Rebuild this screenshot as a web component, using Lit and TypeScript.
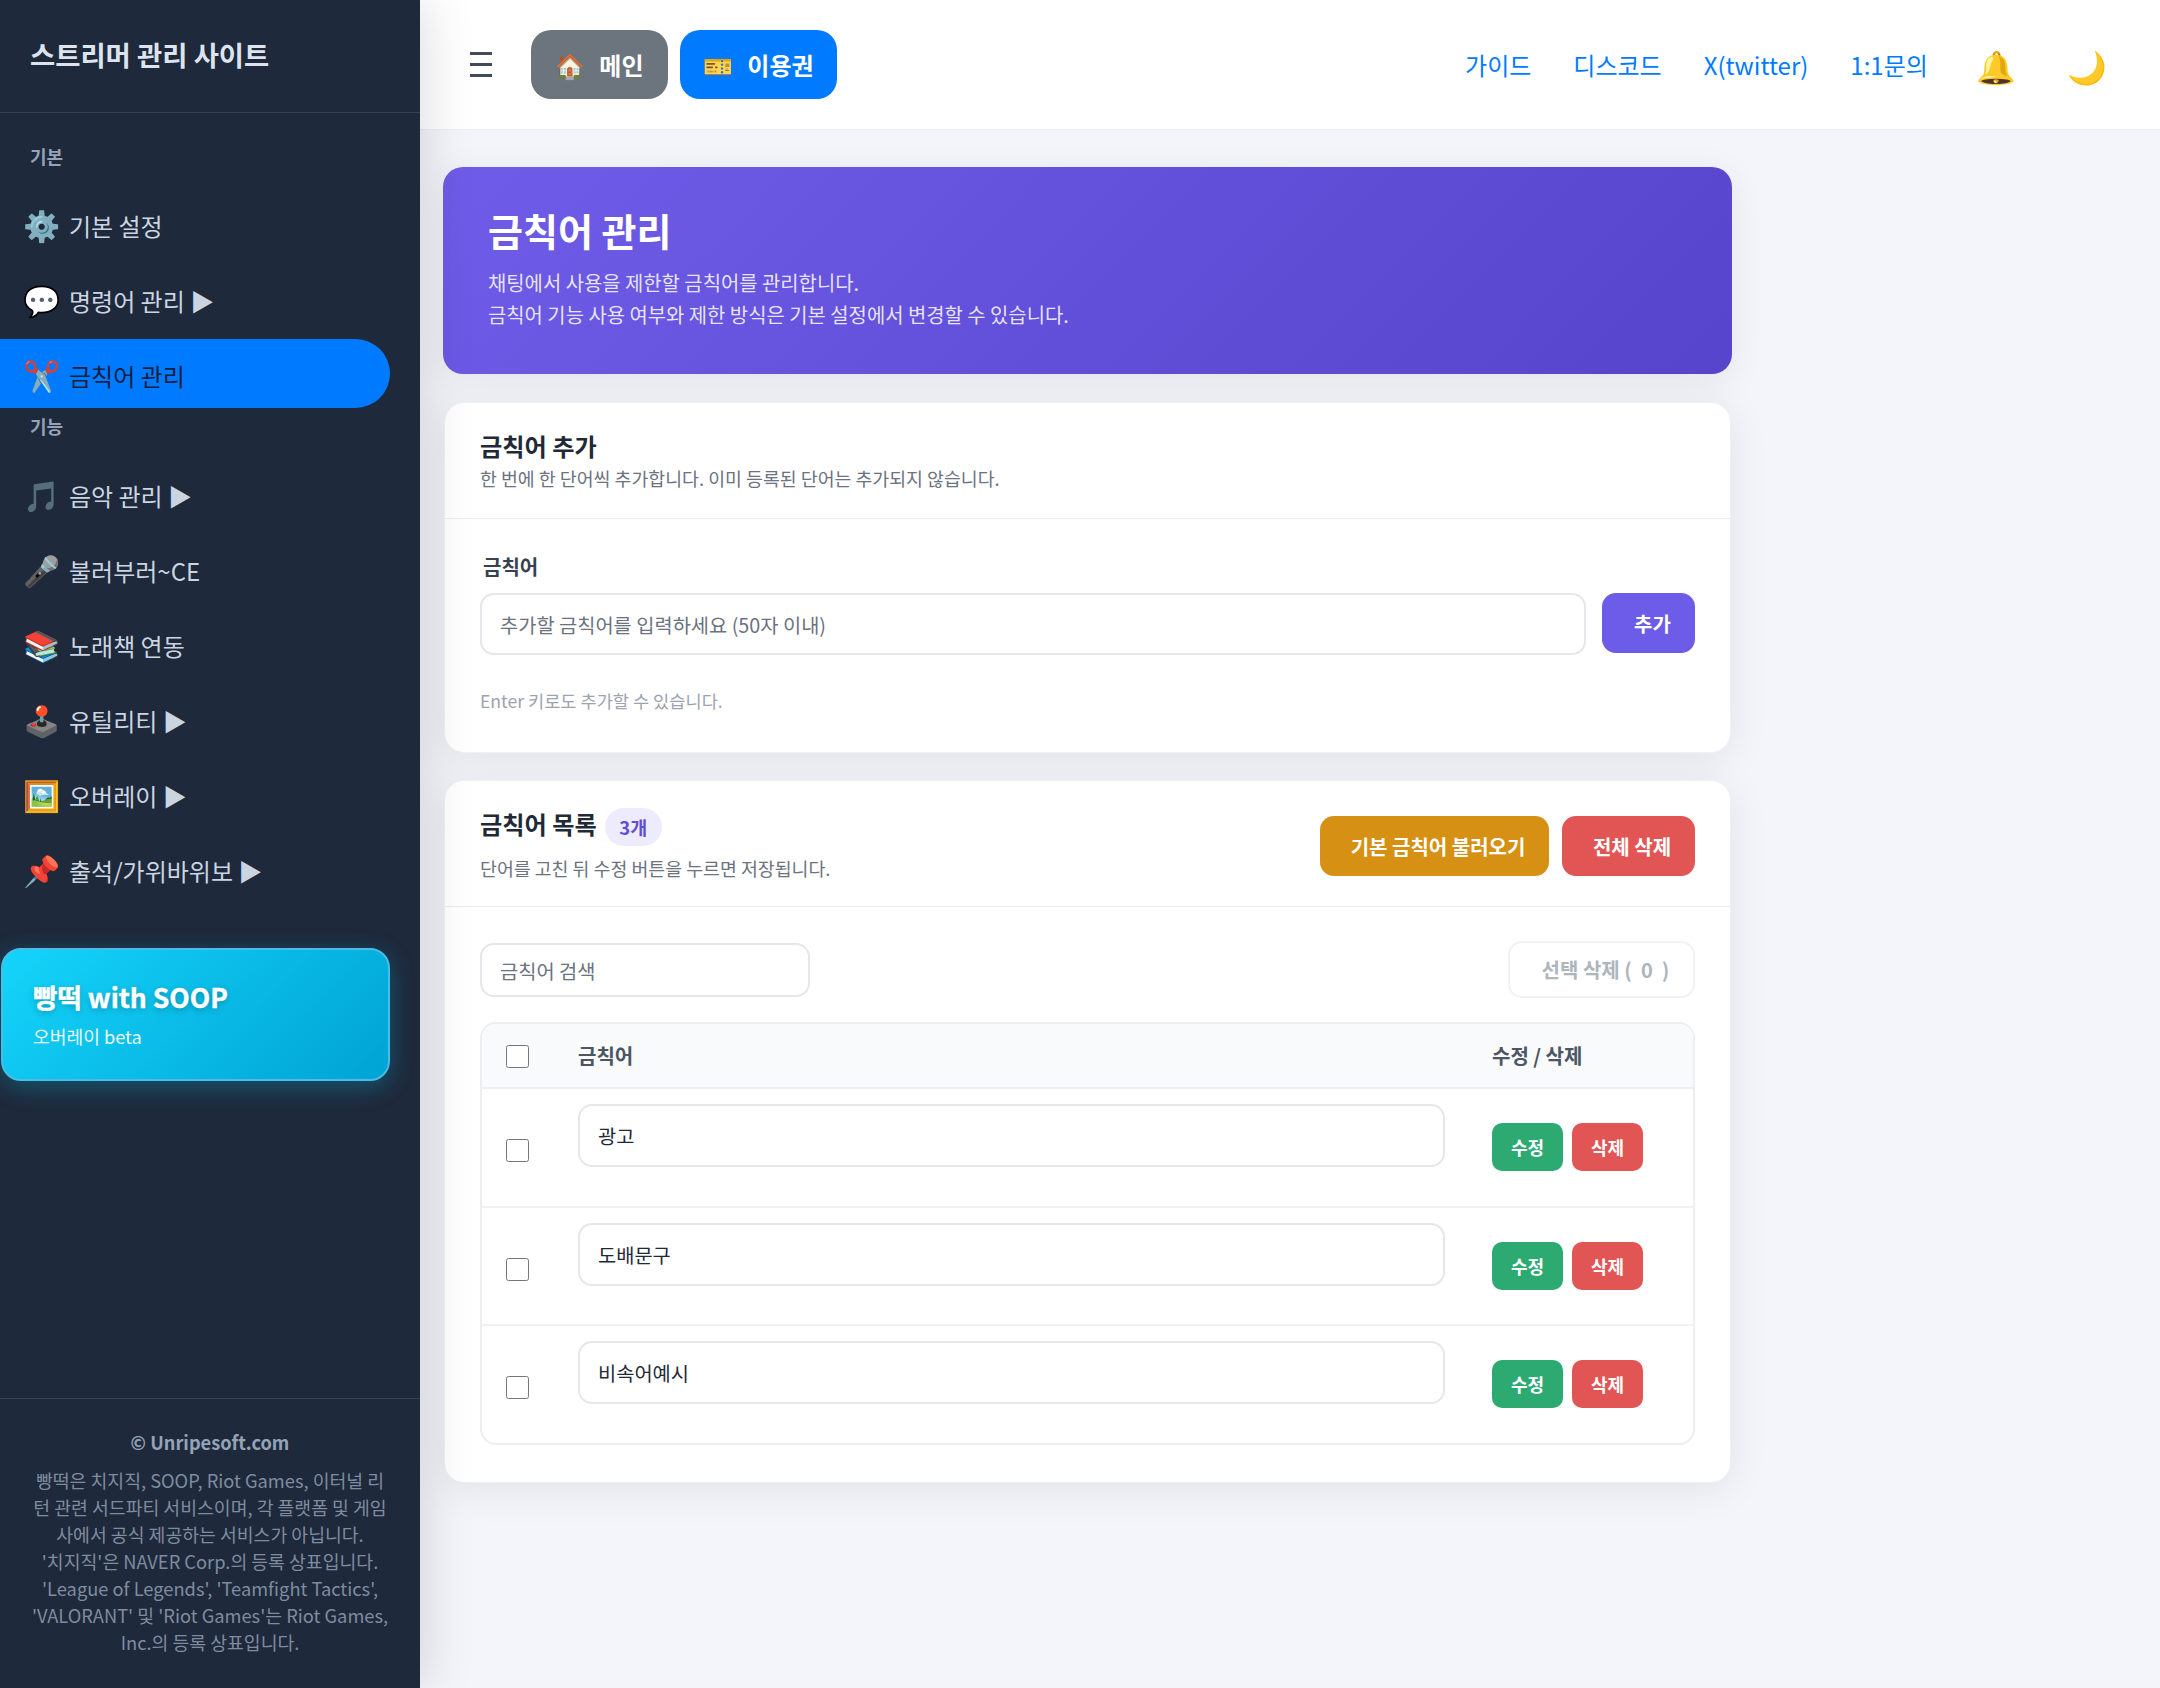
import { LitElement, html, css } from "lit";
import { customElement } from "lit/decorators.js";

@customElement("app-root")
export class AppRoot extends LitElement {
  static styles = css`
    :host { display: block; font-family: "Noto Sans CJK KR", "Noto Sans", "Noto Color Emoji", sans-serif; color: #1f2937; }
    * { box-sizing: border-box; }
    .page { display: flex; width: 2160px; height: 1688px; background: #f3f5fa; overflow: hidden; }
    .side { width: 420px; flex: none; background: #1e293b; display: flex; flex-direction: column; color: #cbd5e1; position: relative; z-index: 2; box-shadow: 4px 0 50px rgba(0,0,0,.14); }
    .brand { height: 113px; border-bottom: 1px solid #334155; padding: 33px 30px 0; font-size: 27.4px; font-weight: 700; line-height: 42px; color: #dde4ed; }
    .nav { flex: 1; padding-top: 30px; display: flex; flex-direction: column; }
    .label { font-size: 18px; font-weight: 700; color: #94a3b8; padding-left: 30px; line-height: 27px; }
    .label.first { margin-bottom: 19px; }
    .label.second { margin-bottom: 19px; margin-top: -1px; }
    .item { height: 69px; width: 390px; margin-bottom: 6px; padding-left: 26px; display: flex; align-items: center; gap: 10px; font-size: 24px; line-height: 36px; border-radius: 0 35px 35px 0; }
    .item .txt { position: relative; top: 2px; }
    .item .emo { font-size: 30px; width: 33px; display: flex; justify-content: center; white-space: nowrap; }
    .item.active { background: #007bff; color: #0f1f3d; }
    .soop { margin-top: 39px; margin-left: 1px; width: 389px; height: 133px; border-radius: 20px; border: 2px solid #48bde8; background: linear-gradient(135deg, #14d4fa 0%, #00a3d4 100%); box-shadow: 0 6px 24px rgba(0,195,240,.3); padding: 27px 30px; color: #fff; }
    .soop b { display: block; font-size: 26.5px; line-height: 40px; font-weight: 700; -webkit-text-stroke: .4px #fff; text-shadow: 0 2px 6px rgba(0,0,0,.25); }
    .soop span { display: block; font-size: 18.2px; line-height: 28px; margin-top: 5px; opacity: .92; }
    .foot { border-top: 1px solid #334155; padding: 28px 30px 30px; text-align: center; font-size: 18.3px; line-height: 27px; color: #7f8ca0; height: 290px; }
    .foot b { display: block; font-size: 18.2px; font-weight: 700; color: #94a3b8; line-height: 30px; margin-bottom: 10px; }
    .main { flex: 1; min-width: 0; display: flex; flex-direction: column; }
    .top { height: 130px; flex: none; background: #fff; border-bottom: 1px solid #e9ebef; display: flex; align-items: center; padding: 0 0 0 50px; }
    .burger { width: 22px; display: flex; flex-direction: column; gap: 8px; margin-right: 39px; }
    .burger i { display: block; height: 3px; background: #414b5a; }
    .tbtn { height: 69px; border-radius: 20px; display: flex; align-items: center; justify-content: center; gap: 14px; color: #fff; font-size: 24px; font-weight: 700; margin-right: 12px; }
    .tbtn .emo { font-size: 24px; }
    .tbtn.g { background: #6c757d; width: 137px; }
    .tbtn.b { background: #007bff; width: 157px; }
    .links { margin-left: auto; display: flex; align-items: center; color: #007bff; font-size: 24px; }
    .links .l { margin-right: 42px; }
    .links .l.q { margin-right: 48.5px; }
    .links .e { font-size: 32px; line-height: 1; margin-right: 51px; }
    .links .e.m { margin-right: 53px; }
    .content { padding: 37px 0 0 23px; width: 1312px; display: flex; flex-direction: column; }
    .hero { height: 207px; border-radius: 20px; background: linear-gradient(135deg, #6f5ce8 0%, #5644cc 100%); color: #fff; padding: 37px 45px; box-shadow: 0 8px 36px rgba(0,0,0,.07); }
    .hero h1 { margin: 0; font-size: 38px; font-weight: 700; line-height: 52px; }
    .hero p { margin: 11px 0 0; font-size: 19.9px; line-height: 32px; color: rgba(255,255,255,.86); }
    .card { background: #fff; border-radius: 20px; margin: 28px 1px 0; box-shadow: 0 6px 40px rgba(0,0,0,.08); border: 1px solid #eef0f3; }
    .card.a { height: 351px; }
    .card.c { height: 703px; margin-top: 27px; }
    .head { padding: 25px 35px 0; height: 116px; border-bottom: 1px solid #e9ecef; }
    h2 { margin: 0; font-size: 24.2px; font-weight: 700; line-height: 36px; color: #1f2937; }
    .sub { font-size: 18.35px; line-height: 28px; color: #6b7280; }
    .body { padding: 33px 35px 0; }
    .fl { font-size: 20px; font-weight: 700; line-height: 30px; color: #374151; padding-left: 3px; margin-bottom: 11px; }
    .row { display: flex; gap: 16px; align-items: flex-start; }
    input.tx { font-family: inherit; border: 2px solid #e5e7eb; border-radius: 14px; background: #fff; padding: 0 18px; outline: none; color: #1f2937; font-size: 19.8px; }
    input.tx::placeholder { color: #6b7280; opacity: 1; }
    .big { flex: 1; height: 62px; }
    .add { width: 93px; height: 60px; border-radius: 14px; background: #6c5ce7; color: #fff; font-weight: 700; font-size: 20px; display: flex; align-items: center; justify-content: center; padding-left: 8px; }
    .hint { margin-top: 32px; font-size: 17.6px; line-height: 27px; color: #9ca3af; }
    .head2 { height: 126px; border-bottom: 1px solid #e9ecef; padding: 23px 35px 0; display: flex; justify-content: space-between; }
    .tl { display: flex; align-items: center; gap: 8px; height: 40px; }
    .badge { width: 57px; height: 38px; border-radius: 19px; background: #eeecfc; color: #5f4fd6; font-size: 18.5px; font-weight: 700; display: flex; align-items: center; justify-content: center; margin-top: 5px; }
    .sub2 { margin-top: 10px; }
    .acts { display: flex; gap: 13px; margin-top: 12px; }
    .btn { height: 60px; border-radius: 14px; color: #fff; font-weight: 700; font-size: 20px; display: flex; align-items: center; justify-content: center; padding-left: 7px; }
    .amber { width: 229px; background: #d69014; }
    .red { width: 133px; background: #e25555; }
    .body2 { padding: 34px 35px 0; }
    .tools { display: flex; justify-content: space-between; align-items: flex-start; }
    .search { width: 330px; height: 54px; margin-top: 2px; }
    .seld { width: 187px; height: 57px; border: 2px solid #f1f2f4; border-radius: 14px; color: #adb5bd; font-weight: 700; font-size: 20px; display: flex; align-items: center; justify-content: center; white-space: pre; padding-left: 8px; }
    .table { margin-top: 24px; border: 2px solid #eceef1; border-radius: 16px; overflow: hidden; }
    .tr { display: grid; grid-template-columns: 96px 914px 1fr; border-bottom: 2px solid #f0f1f4; }
    .tr:last-child { border-bottom: none; height: 117px; }
    .th { height: 65px; background: #f8fafc; border-bottom: 2px solid #eceef1; align-items: center; font-size: 20px; font-weight: 700; color: #4b5563; }
    .th .chk { position: relative; top: 1px; }
    .td { height: 118.5px; }
    .chk { width: 23px; height: 23px; margin: 0 0 0 24px; display: block; }
    .td .chk { margin-top: 50px; }
    .td input.tx { width: 867px; height: 63px; margin-top: 15px; }
    .rb { display: flex; gap: 9px; margin-top: 34px; }
    .sm { width: 71px; height: 48px; border-radius: 10px; color: #fff; font-weight: 700; font-size: 18px; display: flex; align-items: center; justify-content: center; }
    .green { background: #2daa72; }
    .redb { background: #e25555; }
  `;

  item(emo: string, t: string, active = false) {
    return html`<div class="item ${active ? "active" : ""}"><span class="emo">${emo}</span><span class="txt">${t}</span></div>`;
  }

  rowT(v: string) {
    return html`<div class="tr td">
      <div><input class="chk" type="checkbox" /></div>
      <div><input class="tx" .value=${v} /></div>
      <div class="rb"><div class="sm green">수정</div><div class="sm redb">삭제</div></div>
    </div>`;
  }

  render() {
    return html`<div class="page">
      <aside class="side">
        <div class="brand">스트리머 관리 사이트</div>
        <div class="nav">
          <div class="label first">기본</div>
          ${this.item("⚙️", "기본 설정")}
          ${this.item("💬", "명령어 관리 ▶")}
          ${this.item("✂️", "금칙어 관리", true)}
          <div class="label second">기능</div>
          ${this.item("🎵", "음악 관리 ▶")}
          ${this.item("🎤", "불러부러~CE")}
          ${this.item("📚", "노래책 연동")}
          ${this.item("🕹️", "유틸리티 ▶")}
          ${this.item("🖼️", "오버레이 ▶")}
          ${this.item("📌", "출석/가위바위보 ▶")}
          <div class="soop"><b>빵떡 with SOOP</b><span>오버레이 beta</span></div>
        </div>
        <div class="foot">
          <b>© Unripesoft.com</b>
          빵떡은 치지직, SOOP, Riot Games, 이터널 리턴 관련 서드파티 서비스이며, 각 플랫폼 및 게임사에서 공식 제공하는 서비스가 아닙니다.<br />
          '치지직'은 NAVER Corp.의 등록 상표입니다.<br />
          'League of Legends', 'Teamfight Tactics', 'VALORANT' 및 'Riot Games'는 Riot Games, Inc.의 등록 상표입니다.
        </div>
      </aside>
      <div class="main">
        <header class="top">
          <div class="burger"><i></i><i></i><i></i></div>
          <div class="tbtn g"><span class="emo">🏠</span>메인</div>
          <div class="tbtn b"><span class="emo">🎫</span>이용권</div>
          <div class="links">
            <span class="l">가이드</span><span class="l">디스코드</span><span class="l">X(twitter)</span><span class="l q">1:1문의</span>
            <span class="e">🔔</span><span class="e m">🌙</span>
          </div>
        </header>
        <div class="content">
          <section class="hero">
            <h1>금칙어 관리</h1>
            <p>채팅에서 사용을 제한할 금칙어를 관리합니다.<br />금칙어 기능 사용 여부와 제한 방식은 기본 설정에서 변경할 수 있습니다.</p>
          </section>
          <section class="card a">
            <div class="head"><h2>금칙어 추가</h2><div class="sub">한 번에 한 단어씩 추가합니다. 이미 등록된 단어는 추가되지 않습니다.</div></div>
            <div class="body">
              <div class="fl">금칙어</div>
              <div class="row"><input class="tx big" placeholder="추가할 금칙어를 입력하세요 (50자 이내)" /><div class="add">추가</div></div>
              <div class="hint">Enter 키로도 추가할 수 있습니다.</div>
            </div>
          </section>
          <section class="card c">
            <div class="head2">
              <div>
                <div class="tl"><h2>금칙어 목록</h2><span class="badge">3개</span></div>
                <div class="sub sub2">단어를 고친 뒤 수정 버튼을 누르면 저장됩니다.</div>
              </div>
              <div class="acts"><div class="btn amber">기본 금칙어 불러오기</div><div class="btn red">전체 삭제</div></div>
            </div>
            <div class="body2">
              <div class="tools"><input class="tx search" placeholder="금칙어 검색" /><div class="seld">선택 삭제 (  0  )</div></div>
              <div class="table">
                <div class="tr th"><div><input class="chk" type="checkbox" /></div><div>금칙어</div><div>수정 / 삭제</div></div>
                ${this.rowT("광고")}${this.rowT("도배문구")}${this.rowT("비속어예시")}
              </div>
            </div>
          </section>
        </div>
      </div>
    </div>`;
  }
}
